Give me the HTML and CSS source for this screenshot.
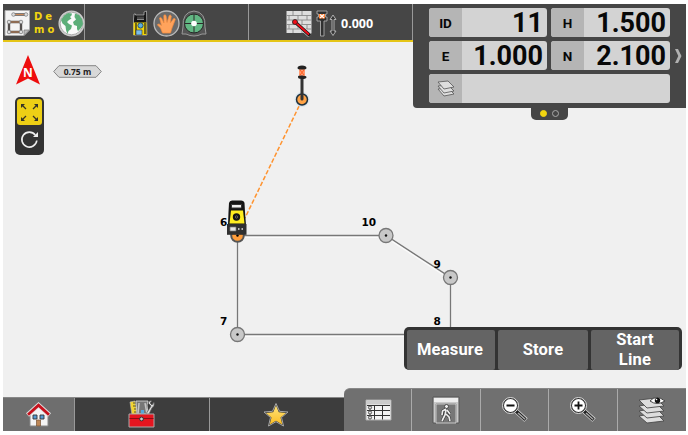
FILE: index.html
```html
<!DOCTYPE html>
<html lang="en">
<head>
<meta charset="utf-8">
<title>Demo survey</title>
<link rel="stylesheet" href="styles.css">
</head>
<body>
<div class="app">
  <header class="topbar">
    <div class="top-cell project">
      <svg width="26" height="26" viewBox="0 0 26 26"><path d="M1 .5H25.500V20L20 25.500H1Z" fill="#f4f4f4" stroke="#aaa"/><path d="M20 25.500V20H25.500Z" fill="#bbb" stroke="#777" stroke-width=".7"/><g fill="none" stroke="#55504e" stroke-width="2.400"><path d="M10 4.500H21M5 12H17V22H5Z"/></g><path d="M11 4.500H20M6 12H16M6 22H16" stroke="#c98858" stroke-width="1"/><g fill="#ddd" stroke="#777" stroke-width=".7"><circle cx="9.500" cy="4.500" r="1.800"/><circle cx="22" cy="4.500" r="1.800"/><circle cx="5" cy="12" r="1.800"/><circle cx="17" cy="12" r="1.800"/><circle cx="5" cy="22" r="1.800"/><circle cx="17" cy="22" r="1.800"/></g></svg>
      <span class="project-name">De<br>mo</span>
      <svg width="27" height="27" viewBox="0 0 27 27"><circle cx="13.500" cy="13.500" r="12.300" fill="#fafafa" stroke="#ccc" stroke-width="1.500"/><circle cx="13.500" cy="13.500" r="11.300" fill="none" stroke="#777" stroke-width=".6"/><path d="M3 10 6 5.500 10 3 14 3.500 13.500 5.500 12 7 13.500 8.500 11 10 9 12 11 14 14 15.500 13 19 10.500 21 9.500 24 8 20 7.500 16 4.500 13.500Z" fill="#5cae79"/><path d="M17 3.500 21 5 24 9 25 14 23 18 20 21 19 19 19 16 16 15 15 12 18 9.500 16.500 7Z" fill="#5cae79"/></svg>
    </div>
    <div class="top-cell sensors">
      <svg width="16" height="27" viewBox="0 0 16 27"><path d="M1.500 25V9L2 4 3.500 4 3.500 5H12V2L14.500 1 15 25Z" fill="#161616" stroke="#bbb" stroke-width=".7"/><path d="M5 6.500H12V9H5Z" fill="#464646"/><path d="M5 9.500H12" stroke="#ddd" stroke-width=".6"/><path d="M1.500 12.500H14.500V25H1.500Z" fill="#f2d60a"/><path d="M4 13V25M13 13V24" stroke="#1c1c1c" stroke-width="1.200"/><circle cx="8.500" cy="15.500" r="2.600" fill="#5caee0" stroke="#27526b"/><path d="M4 20H10V25H4Z" fill="#78bbe9" stroke="#333" stroke-width=".6"/></svg>
      <svg width="27" height="27" viewBox="0 0 27 27"><circle cx="13.500" cy="13.500" r="12.500" fill="#6a6a6a" stroke="#bbb" stroke-width="1.300"/><path d="M9.500 23 7.500 18 4.500 15Q4.500 13.500 6.500 14.200L8.500 15.500 6.500 8Q7.500 6.800 8.500 8L11 13 10.800 5.500Q12 4 13 5.500L14 12.500 16.200 5.500Q17.500 4.500 18.300 6L17.300 13 20.700 8.500Q22 8 22.300 9.500L19 18 17.500 23Z" fill="#ffa35c" stroke="#f08a3c" stroke-width=".7"/></svg>
      <svg width="26" height="27" viewBox="0 0 26 27"><path d="M13 1Q25 2 24 17L25 24 21 24Q13 28 5 24L1 24 2 17Q1 2 13 1Z" fill="#555" stroke="#999"/><circle cx="13" cy="13.500" r="9.500" fill="#62b783" stroke="#262626"/><path d="M13 4V23M3.500 13.500H22.500" stroke="#2b2b2b"/><circle cx="13" cy="13.500" r="2.800" fill="#fff"/></svg>
    </div>
    <div class="top-cell target">
      <svg width="27" height="27" viewBox="0 0 27 27"><path d="M.5 1H25.500V23H.5Z" fill="#dedede"/><path d="M.5 5.500H25.500M.5 10H25.500M.5 14.500H25.500M.5 19H25.500M7 1V5.500M16 1V5.500M3 5.500V10M12 5.500V10M21 5.500V10M7 10V14.500M16 10V14.500M3 14.500V19M12 14.500V19M21 14.500V19M7 19V23M16 19V23" stroke="#898989" stroke-width=".9"/><path d="M9 12 24 25.500" stroke="#ddd" stroke-width="4.500"/><path d="M9 12 24 25.500" stroke="#161616" stroke-width="3.400"/><path d="M9 12 23 24.500" stroke="#f20d18" stroke-width="1.800"/><circle cx="9" cy="12" r="2.500" fill="#f20d18" stroke="#222" stroke-width=".8"/></svg>
      <svg width="21" height="27" viewBox="0 0 21 27"><path d="M1 1H11V4H9.500V7H11V11H8V26H4.500V11H1V7H2.500V4H1Z" fill="#303030" stroke="#aaa" stroke-width=".9"/><path d="M3 4H9V8.500H3Z" fill="#ff7b2c"/><path d="M4 4.500 8 8M8 4.500 4 8" stroke="#fff" stroke-width="1.100"/><path d="M17 5 20 9.500H18V21H20L17 25.500 14 21H16V9.500H14Z" fill="#353535" stroke="#bbb" stroke-width=".9"/></svg>
      <span class="target-height">0.000</span>
    </div>
  </header>

  <main class="map">
    <svg class="plan" width="683" height="355" viewBox="3 42 683 355">
      <g fill="none" stroke="#fff" stroke-width="3" opacity=".65"><path d="M237.500 335.500V236.500H386L450.500 278.500V335.500Z"/></g>
      <path d="M237.500 334.500V235.500H386L450.500 277.500V334.500Z" fill="none" stroke="#777" stroke-width="1.400"/>
      <path d="M302 100 245 218" stroke="#ff932f" stroke-width="1.500" stroke-dasharray="4.500 2"/>
      <g class="node"><circle cx="386" cy="235.500" r="7"/><circle cx="450.500" cy="277.500" r="7"/><circle cx="237.500" cy="334.500" r="7"/></g>
      <g fill="#111"><circle cx="386" cy="235.500" r="1.200"/><circle cx="450.500" cy="277.500" r="1.200"/><circle cx="237.500" cy="334.500" r="1.200"/></g>
      <g class="point-label"><text x="220" y="226">6</text><text x="361.500" y="226">10</text><text x="433.500" y="268">9</text><text x="220" y="325">7</text><text x="433.500" y="325">8</text></g>
      <circle cx="302" cy="99.500" r="7.500" fill="#d7e5ef"/><circle cx="302" cy="99.500" r="5.500" fill="#ffa347" stroke="#20313d" stroke-width="1.500"/>
      <path d="M302 78V99" stroke="#333" stroke-width="3" stroke-linecap="round"/><path d="M299 69H305V76H299Z" fill="#ff9b72"/><path d="M300 70 304 75M304 70 300 75" stroke="#ff5e21"/><path d="M297.500 68Q297.500 65.500 302 65.500T306.500 68Q306.500 69.500 302 69.500T297.500 68ZM298 76.500Q298 75.500 302 75.500T306.500 77Q306.500 79 302 79T298 76.500Z" fill="#222"/>
      <circle cx="237.500" cy="235.500" r="6.300" fill="#ff9d3b" stroke="#555" stroke-width="2"/><circle cx="237.500" cy="235.500" r="1.200"/>
      <path d="M228 225 228.500 212 229 203Q229.500 200.500 232 200.500H241Q244 200.500 244.500 203L245 212 246 225Z" fill="#151515"/><path d="M231.500 204.500H241.500V208H231.500Z" fill="#eee" stroke="#333"/><path d="M229.500 223.500 231 210.500H243L244.500 223.500Z" fill="#ffed20"/><circle cx="236.500" cy="217" r="2.600" fill="#888" stroke="#151515" stroke-width="2.200"/><circle cx="236.500" cy="217" r="1" fill="#222"/><path d="M227 224H246.500V234.800H227Z" fill="#303030"/><path d="M230 227H236V231H230Z" fill="#e5e5e5" stroke="#777" stroke-width=".7"/><path d="M238 229H239.500M241.500 229H243" stroke="#bbb" stroke-width="2"/>
    </svg>
    <div class="map-tools">
      <div class="orientation">
        <svg width="24" height="30" viewBox="0 0 24 30"><path d="M12 0 24 29.500 12 23.500 0 29.500Z" fill="#ee0d0d"/><text class="north" x="12" y="21.500" text-anchor="middle">N</text></svg>
        <div class="scale"><svg width="49" height="13" viewBox="0 0 49 13"><path d="M.7 6.500 6 .7H43L48.300 6.500 43 12.300H6Z" fill="#d8d8d8" stroke="#858585"/><text class="scale-text" x="24.500" y="9.500" text-anchor="middle">0.75 m</text></svg></div>
      </div>
      <div class="view-tools">
        <button class="view-tool selected" aria-label="Zoom extents"><svg width="25" height="26" viewBox="0 0 25 26"><path d="M9 10 5.500 6.500M16 10 19.500 6.500M9 17 5.500 20.500M16 17 19.500 20.500" stroke="#343327" stroke-width="1.300"/><path d="M4 5H8L4 9ZM21 5H17L21 9ZM4 22H8L4 18ZM21 22H17L21 18Z" fill="#343327"/></svg></button>
        <button class="view-tool" aria-label="Rotate"><svg width="25" height="27" viewBox="0 0 25 27"><path d="M18.300 10A7.500 7.500 0 1 0 19.800 15.500" fill="none" stroke="#eee" stroke-width="1.600"/><path d="M21 7V12H16Z" fill="#eee"/></svg></button>
      </div>
    </div>
    <div class="actions"><button>Measure</button><button>Store</button><button>Start<br>Line</button></div>
  </main>

  <nav class="bottombar">
    <button class="home" aria-label="Home"><svg width="26" height="25" viewBox="0 0 26 25"><path d="M4 12V24H22V12L12.500 3Z" fill="#f4f4f4" stroke="#888"/><path d="M1.500 13 12.500 3 23.500 13" fill="none" stroke="#ddd" stroke-width="4.500"/><path d="M2 12.700 12.500 3.200 23 12.700" fill="none" stroke="#c6111c" stroke-width="2.800"/><path d="M7 13H11V17H7ZM14 13H18V17H14Z" fill="#559bd4" stroke="#333" stroke-width=".9"/><path d="M10.500 18H14.500V24H10.500Z" fill="#bd8757" stroke="#765234" stroke-width=".7"/></svg></button>
    <button class="tools" aria-label="Tools"><svg width="27" height="28" viewBox="0 0 27 28"><path d="M2 2 7 1 9 15H4Z" fill="#f2d431" stroke="#bbb" stroke-width=".6"/><path d="M5 3H8M5 6H8M6 9H8M6 12H9" stroke="#333" stroke-width=".8"/><path d="M8 1H20L19 5 20 14H9Z" fill="#777" stroke="#ddd" stroke-width=".8"/><path d="M11 3 10 14M17 3 19 14" stroke="#c5c5c5" stroke-width="1.500"/><path d="M13 14V10H16V14" fill="#55a6dd"/><path d="M18 14 23 6 20 3Q21 0 24 1L22 3 24 5 26 2Q27 6 24 8L21 14Z" fill="#ddd" stroke="#555" stroke-width=".7"/><path d="M1 14H26V27H1Z" fill="#e5151f" stroke="#aaa"/><path d="M1.500 18.500H25.500" stroke="#8b0e14"/><circle cx="13.500" cy="19" r="1.900" fill="#ccc" stroke="#333"/></svg></button>
    <button class="favourites" aria-label="Favourites"><svg width="26" height="26" viewBox="0 0 26 26"><defs><linearGradient id="gold" x2="0" y2="1"><stop stop-color="#ffe37a"/><stop offset="1" stop-color="#fbbd24"/></linearGradient></defs><path d="M13 1.500 16.500 9.300 25 10 18.500 15.500 20.500 24 13 19.700 5.500 24 7.500 15.500 1 10 9.500 9.300Z" fill="#333" stroke="#aaa"/><path d="M13 3.500 15.800 10.300 23 11 17.500 15.500 19.300 22.500 13 18.800 6.700 22.500 8.500 15.500 3 11 10.200 10.300Z" fill="url(#gold)"/></svg></button>
  </nav>

  <nav class="toolbar">
    <button aria-label="Table"><svg class="table-icon" width="27" height="22" viewBox="0 0 27 22"><path d="M1 1H26V21H1Z" fill="#f4f4f4" stroke="#aaa"/><path d="M1.500 1.500H25.500V5.500H1.500Z" fill="#ccc"/><path d="M2 6.500H25M2 11.500H25M2 16.500H25M9.500 6V20.500M17.500 6V20.500" stroke="#333"/><path d="M5 7V20" stroke="#666"/><g fill="#ddd" stroke="#333" stroke-width=".8"><circle cx="5" cy="8.500" r="1.600"/><circle cx="5" cy="13.500" r="1.600"/><circle cx="5" cy="18.500" r="1.600"/></g></svg></button>
    <button aria-label="Exit"><svg width="28" height="28" viewBox="0 0 28 28"><path d="M1 1H27V27H24V8H4V27H1Z" fill="#c9c9c9" stroke="#555"/><path d="M2 2H26V6H2Z" fill="#eee"/><path d="M4 8H24V27H4Z" fill="#777" stroke="#ddd" stroke-width=".8"/><circle cx="14.500" cy="10.500" r="2" fill="#eee" stroke="#333" stroke-width=".8"/><path d="M14 13 10.500 15 10 19M14 14 13 19 10 25M14 18 17 21 18 25M15 14 18 18" fill="none" stroke="#333" stroke-width="2.800"/><path d="M14 13 10.500 15 10 19M14 14 13 19 10 25M14 18 17 21 18 25M15 14 18 18" fill="none" stroke="#eee" stroke-width="1.700"/></svg></button>
    <button aria-label="Zoom out"><svg width="27" height="27" viewBox="0 0 27 27"><path d="M15 15 25 24" stroke="#ddd" stroke-width="5"/><path d="M15 15 24.500 23.700" stroke="#222" stroke-width="3.500"/><path d="M17 17 24 23.200" stroke="#aaa" stroke-width="1.500"/><circle cx="9.500" cy="9.500" r="8" fill="#333" stroke="#ddd"/><circle cx="9.500" cy="9.500" r="6.500" fill="#fff"/><path d="M5.500 9.500H13.500" stroke="#111" stroke-width="1.800"/></svg></button>
    <button aria-label="Zoom in"><svg width="27" height="27" viewBox="0 0 27 27"><path d="M15 15 25 24" stroke="#ddd" stroke-width="5"/><path d="M15 15 24.500 23.700" stroke="#222" stroke-width="3.500"/><path d="M17 17 24 23.200" stroke="#aaa" stroke-width="1.500"/><circle cx="9.500" cy="9.500" r="8" fill="#333" stroke="#ddd"/><circle cx="9.500" cy="9.500" r="6.500" fill="#fff"/><path d="M5.500 9.500H13.500M9.500 5.500V13.500" stroke="#111" stroke-width="1.800"/></svg></button>
    <button aria-label="Layers"><svg width="28" height="28" viewBox="0 0 28 28"><g fill="#ddd" stroke="#4b4b4b" stroke-width=".9"><path d="M1 20 18 17 26 25 9 27Z"/><path d="M1 15 18 12 26 20 9 22Z"/><path d="M1 10 18 7 26 15 9 17Z"/><path d="M1 4 18 2 26 10 9 12Z"/></g><path d="M12 5Q18 -2 27 5 19 10 12 5Z" fill="#fff" stroke="#444"/><circle cx="19.500" cy="4.500" r="2.700" fill="#111"/><circle cx="18.500" cy="3.500" r=".8" fill="#fff"/></svg></button>
  </nav>

  <aside class="readout">
    <div class="fields">
      <div class="field"><span class="label">ID</span><span class="value">11</span></div>
      <div class="field"><span class="label">H</span><span class="value">1.500</span></div>
      <div class="field"><span class="label">E</span><span class="value">1.000</span></div>
      <div class="field"><span class="label">N</span><span class="value">2.100</span></div>
      <div class="field wide"><span class="label"><svg width="18" height="18" viewBox="0 0 18 18"><g fill="#dedede" stroke="#555" stroke-width=".8"><path d="M1 9 11 8 17 14 7 16Z"/><path d="M1 6 11 5 17 11 7 13Z"/><path d="M1 2 11 1 17 7 7 9Z"/></g></svg></span><span class="value"></span></div>
    </div>
    <svg class="next" width="7" height="16" viewBox="0 0 7 16"><path d="M0 1H3L6.500 8 3 15H0L3.300 8Z" fill="#b0b0b0"/></svg>
    <div class="pager"><i class="dot current"></i><i class="dot"></i></div>
  </aside>
</div>
</body>
</html>
```
FILE: styles.css
```css
* { box-sizing: border-box; }
body { margin: 0; padding: 4px 2px 4px 3px; background: #fff; font-family: Roboto, "Liberation Sans", sans-serif; }
button { margin: 0; padding: 0; border: 0; font: inherit; color: inherit; background: none; }
svg { display: block; flex: none; }

.app { position: relative; width: 683px; height: 427px; display: grid; grid-template-rows: 38px 1fr 34px; background: #f0f0f0; overflow: hidden; }

.topbar { display: grid; grid-template-columns: 82px 164px 164px; width: 410px; background: #464646; border-bottom: 2px solid #e5c516; }
.top-cell { display: flex; align-items: center; border-right: 1px solid #999; padding-top: 2px; }
.project { padding-left: 1px; }
.project-name { width: 28px; padding-left: 4px; font: bold 10px/13px "DejaVu Sans", sans-serif; letter-spacing: 3px; color: #f2d510; }
.project svg:last-child { margin-left: 1px; }
.sensors { padding-left: 47px; gap: 1px; }
.sensors svg:first-child { margin-right: 4px; }
.target { padding-left: 37px; gap: 3px; }
.target-height { margin-left: 1px; font: bold 12.500px "Noto Sans", sans-serif; color: #fff; }

.map { position: relative; min-height: 0; }
.plan { position: absolute; inset: 0; }
.node { fill: #c8c8c8; stroke: #777; stroke-width: 1.3; }
.point-label { font: bold 10.5px "DejaVu Sans", sans-serif; fill: #000; }
.north { font: bold 12px "Noto Sans", sans-serif; fill: #fff; }
.scale-text { font: bold 8.500px "Noto Sans", sans-serif; fill: #222; }
.map-tools { position: relative; width: 110px; padding: 13px 0 0 12px; }
.orientation { display: flex; gap: 13px; margin-left: 1px; }
.scale { padding-top: 10px; }
.view-tools { display: flex; flex-direction: column; width: 29px; height: 58px; margin-top: 12px; padding: 2px; border-radius: 5px; background: #333; }
.view-tool.selected { border-radius: 3px; background: #edcf15; }

.actions { position: absolute; right: 4px; bottom: 27px; display: grid; grid-template-columns: 88px 90px 88px; gap: 3px; width: 278px; height: 43px; padding: 3px; border-radius: 5px; background: #333; }
.actions button { border-radius: 2px; background: #646464; color: #fff; font-weight: 700; font-size: 16.5px; line-height: 20px; letter-spacing: .2px; }
.actions button:first-child { padding-right: 2px; }

.bottombar { display: grid; grid-template-columns: 71px 134px 135px; gap: 1px; width: 342px; background: #999; border-top: 1px solid #888; }
.bottombar button { display: flex; align-items: center; justify-content: center; background: #3d3d3d; }
.bottombar .home { background: #6e6e6e; }
.bottombar .tools { padding: 0 1px 2px 0; }
.bottombar .favourites { padding-right: 3px; }
.toolbar { position: absolute; right: 0; bottom: 0; display: grid; grid-template-columns: repeat(5, 1fr); width: 342px; height: 43px; overflow: hidden; border-top: 1px solid #888; border-radius: 6px 0 0; background: #707070; }
.toolbar button { display: flex; align-items: center; justify-content: center; padding-bottom: 1px; border-right: 1px solid #aaa; }
.toolbar button:last-child { border: 0; }
.table-icon { margin-left: 1px; }

.readout { position: absolute; top: 0; right: 0; display: flex; align-items: center; width: 273px; height: 104px; padding: 0 4px 1px 16px; border-radius: 0 0 0 4px; background: #464646; }
.fields { display: grid; grid-template-columns: 118px 119px; grid-template-rows: repeat(3, 29px); gap: 4px; width: 241px; }
.field { display: flex; border-radius: 3px; background: #d3d3d3; color: #080808; }
.wide { grid-column: span 2; }
.label { display: flex; align-items: center; justify-content: center; width: 33px; border-radius: 3px 0 0 3px; background: #b5b5b5; font-size: 13.500px; font-weight: 700; }
.value { flex: 1; padding-right: 4px; text-align: right; font-size: 27px; font-weight: 700; line-height: 31px; height: 29px; }
.next { margin-left: 5px; }
.pager { position: absolute; top: 103px; left: 118px; display: flex; align-items: center; justify-content: center; gap: 5px; width: 37px; height: 13px; border-radius: 0 0 5px 5px; background: #464646; }
.dot { width: 7px; height: 7px; border: 1px solid #aaa; border-radius: 50%; }
.dot.current { border-color: #f2d510; background: #f2d510; }
```
